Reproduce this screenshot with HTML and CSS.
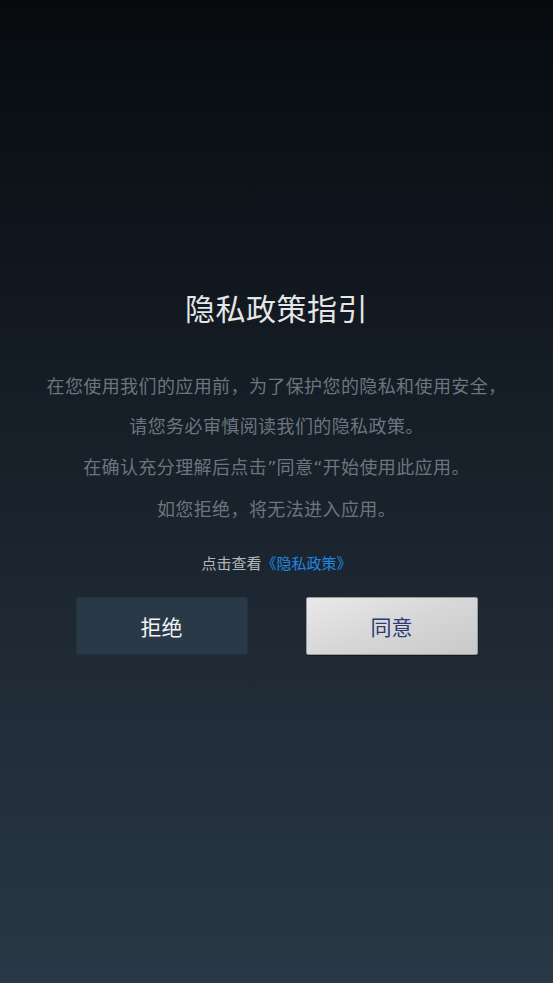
FILE: index.html
```html
<!DOCTYPE html>
<html lang="zh">
<head>
<meta charset="utf-8">
<link rel="stylesheet" href="styles.css">
</head>
<body>
<main class="screen">
  <h1 class="title">隐私政策指引</h1>
  <div class="desc">
    <p>在您使用我们的应用前，为了保护您的隐私和使用安全，</p>
    <p>请您务必审慎阅读我们的隐私政策。</p>
    <p>在确认充分理解后点击<span class="q">”</span>同意<span class="q">“</span>开始使用此应用。</p>
    <p>如您拒绝，将无法进入应用。</p>
  </div>
  <p class="view">点击查看<a class="link">《隐私政策》</a></p>
  <div class="actions">
    <button class="btn btn-reject">拒绝</button>
    <button class="btn btn-agree">同意</button>
  </div>
</main>
</body>
</html>
```
FILE: styles.css
```css
html, body {
  margin: 0;
  padding: 0;
  height: 100%;
}
body {
  background: linear-gradient(to bottom, #070b0e 0%, #111820 30%, #1d2731 60%, #293846 100%);
  font-family: "Noto Sans CJK SC", "Noto Sans", sans-serif;
}
.screen {
  height: 983px;
  display: flex;
  flex-direction: column;
  align-items: center;
  padding-top: 285px;
  box-sizing: border-box;
}
.title {
  margin: 0;
  font-size: 30px;
  font-weight: 400;
  line-height: 44px;
  color: #e4e6e8;
  letter-spacing: 0.5px;
}
.desc {
  margin-top: 36px;
  text-align: center;
}
.desc p {
  margin: 0;
  font-size: 18px;
  line-height: 40.4px;
  color: #6c757f;
  letter-spacing: 0.4px;
}
.q {
  font-family: "DejaVu Sans", sans-serif;
  letter-spacing: 0;
}
.view {
  margin: 22px 0 0;
  font-size: 15px;
  line-height: 24px;
  color: #b4b8bc;
}
.link {
  color: #1f87e0;
}
.actions {
  margin-top: 22px;
  display: flex;
  gap: 58px;
}
.btn {
  width: 172px;
  height: 58px;
  font-family: inherit;
  font-size: 21px;
  border-radius: 2px;
  padding: 0;
  cursor: pointer;
}
.btn-reject {
  background: #2a3947;
  color: #f2f4f6;
  border: 1px solid #243240;
}
.btn-agree {
  background: linear-gradient(160deg, #e8e9e8 0%, #d6d7d6 50%, #c8c9c8 100%);
  border: 1px solid #9a9c9e;
  color: #2c3a78;
  box-shadow: 0 1px 1px rgba(0,0,0,0.4);
}
```
